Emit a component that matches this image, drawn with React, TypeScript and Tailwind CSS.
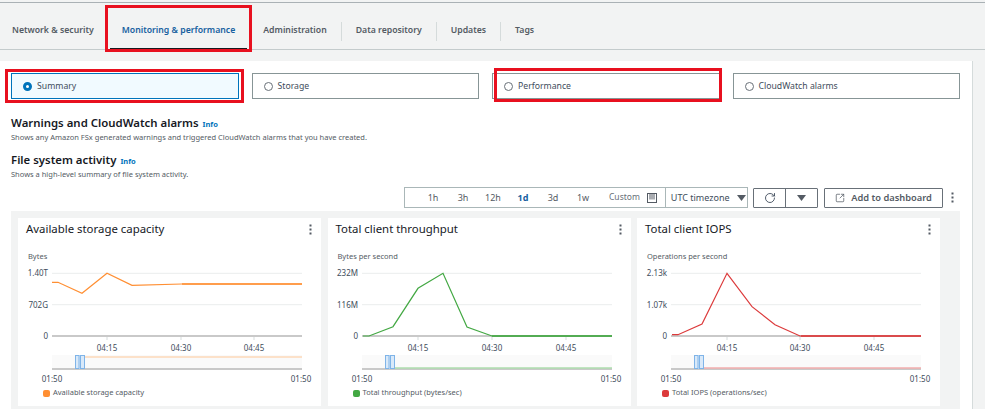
import React from "react";
import { RotateCw, SquareArrowOutUpRight } from "lucide-react";

const Kebab = () => (
  <svg width="3" height="11" viewBox="0 0 3 11" fill="#545b64">
    <rect x="0.5" y="0.5" width="2" height="2" />
    <rect x="0.5" y="4.5" width="2" height="2" />
    <rect x="0.5" y="8.5" width="2" height="2" />
  </svg>
);

const Caret = ({ color = "#545b64" }: { color?: string }) => (
  <svg width="9" height="6" viewBox="0 0 9 6" fill={color}>
    <path d="M0 0h9L4.5 6z" />
  </svg>
);

const RedBox = ({ className }: { className: string }) => (
  <span className={`absolute border-[3px] border-[#e8101f] pointer-events-none ${className}`} />
);

const tabs = ["Network & security", "Monitoring & performance", "Administration", "Data repository", "Updates", "Tags"];

const Tabs = () => (
  <div className="flex items-center h-[47px] pt-[10px] border-b border-[#c4cbcc]">
    {tabs.map((tab, i) => (
      <div
        key={tab}
        className={`relative flex items-center h-[19px] px-[14px] text-[8.7px] font-semibold whitespace-nowrap ${
          i === 0 ? "pl-[12px]" : ""
        } ${i > 1 && i < 5 ? "border-r border-[#d5dbdb]" : ""} ${
          i === 1 ? "text-[#16609f]" : "text-[#545b64]"
        }`}
      >
        {tab}
        {i === 1 && (
          <>
            <span className="absolute left-[2px] right-[2px] top-[26px] h-[2px] bg-[#16191f]" />
            <RedBox className="-left-[3px] -right-[3px] -top-[17px] -bottom-[11px]" />
          </>
        )}
      </div>
    ))}
  </div>
);

const RadioTile = ({ label, active, red }: { label: string; active?: boolean; red?: string }) => (
  <div
    className={`relative flex items-center h-[26px] pl-[11px] gap-[5px] border text-[8.7px] text-[#414d5c] ${
      active ? "bg-[#f1faff] border-[#0073bb]" : "border-[#879596]"
    }`}
  >
    {active ? (
      <span className="w-[9px] h-[9px] rounded-full border-[3px] border-[#0073bb] bg-white" />
    ) : (
      <span className="w-[9px] h-[9px] rounded-full border border-[#687078] bg-white" />
    )}
    <span className="pt-[1px]">{label}</span>
    {red && <RedBox className={red} />}
  </div>
);

const Heading = ({ title, desc }: { title: string; desc: string }) => (
  <>
    <div className="flex items-baseline gap-[4px] h-[16px] leading-[16px]">
      <span className="text-[11.4px] font-semibold text-[#16191f]">{title}</span>
      <span className="text-[7.5px] font-bold text-[#0073bb]">Info</span>
    </div>
    <div className="h-[10px] mt-[1px] leading-[10px] text-[7.5px] text-[#545b64]">{desc}</div>
  </>
);

const ranges = ["1h", "3h", "12h", "1d", "3d", "1w"];

const Toolbar = () => (
  <div className="flex justify-end items-center h-[21px] mt-[8px] pr-[18px] gap-[5px]">
    <div className="flex items-center h-[21px] w-[344px] pl-[13px] border border-[#aab7b8] text-[9px] text-[#545b64]">
      {ranges.map((r) => (
        <span key={r} className={`w-[30px] text-center ${r === "1d" ? "font-bold text-[#16609f]" : ""}`}>
          {r}
        </span>
      ))}
      <span className="ml-[11px] text-[8.5px] text-[#687078]">Custom</span>
      <svg className="ml-[7px]" width="10" height="10" viewBox="0 0 10 10" fill="none" stroke="#545b64">
        <rect x="0.5" y="0.5" width="9" height="9" />
        <path d="M3 0.5v6M5 0.5v6M7 0.5v6" />
      </svg>
      <span className="flex items-center h-full ml-[8px] pl-[5px] gap-[7px] border-l border-[#aab7b8] whitespace-nowrap text-[#414d5c]">
        UTC timezone
        <Caret />
      </span>
    </div>
    <div className="flex h-[20px] border border-[#687078] rounded-[1px] text-[#414d5c]">
      <span className="flex items-center justify-center w-[32px] border-r border-[#687078]">
        <RotateCw size={12} strokeWidth={1.8} />
      </span>
      <span className="flex items-center justify-center w-[31px]">
        <Caret />
      </span>
    </div>
    <div className="flex items-center justify-center h-[20px] w-[119px] ml-[1px] gap-[6px] border border-[#687078] rounded-[1px] text-[9.3px] font-semibold text-[#545b64] whitespace-nowrap">
      <SquareArrowOutUpRight size={10} strokeWidth={1.8} />
      Add to dashboard
    </div>
    <span className="ml-[3px]">
      <Kebab />
    </span>
  </div>
);

type Chart = {
  title: string;
  unit: string;
  y: [string, string];
  ticks: number[];
  points: string;
  color: string;
  light: string;
  miniY: number;
  flatY: number;
  legend: string;
};

const charts: Chart[] = [
  {
    title: "Available storage capacity",
    unit: "Bytes",
    y: ["1.40T", "702G"],
    ticks: [89, 163, 236],
    points: "34,20.3 40,20.3 64,31.3 89,11.3 114,23.3 164,22 284,22",
    color: "#ff8f33",
    light: "#fcd9b8",
    miniY: 95,
    flatY: 22,
    legend: "Available storage capacity",
  },
  {
    title: "Total client throughput",
    unit: "Bytes per second",
    y: ["232M", "116M"],
    ticks: [90, 164, 238],
    points: "35,74 41,74 65,64.7 90,26.3 115,11.3 139,65 164,74 284,74",
    color: "#43a843",
    light: "#aedcae",
    miniY: 106,
    flatY: 74,
    legend: "Total throughput (bytes/sec)",
  },
  {
    title: "Total client IOPS",
    unit: "Operations per second",
    y: ["2.13k", "1.07k"],
    ticks: [90, 163, 237],
    points: "35,72.7 41,72.7 65,62 90,11.3 115,44.7 138,62.7 163,74 284,74",
    color: "#dc3a3b",
    light: "#f2aeae",
    miniY: 106,
    flatY: 74,
    legend: "Total IOPS (operations/sec)",
  },
];

const ChartCard = ({ chart }: { chart: Chart }) => {
  const labels = ["04:15", "04:30", "04:45"];
  return (
    <div className="bg-white pb-[7px]">
      <div className="flex items-center justify-between h-[22px] pl-[8px] pr-[9px] text-[11.4px] text-[#16191f] whitespace-nowrap">
        {chart.title}
        <Kebab />
      </div>
      <div className="h-[12px] mt-[10px] pl-[10px] leading-[12px] text-[7.5px] text-[#545b64]">{chart.unit}</div>
      <svg width="303" height="123" className="block" fontSize="8" fill="#414d5c">
        <line x1="34" x2="284" y1="11.3" y2="11.3" stroke="#eaeded" />
        <line x1="34" x2="284" y1="42.7" y2="42.7" stroke="#eaeded" />
        <line x1="34" x2="284" y1="74" y2="74" stroke="#c9c9c9" strokeWidth="2" />
        <text x="30" y="14" textAnchor="end">{chart.y[0]}</text>
        <text x="30" y="45.5" textAnchor="end">{chart.y[1]}</text>
        <text x="30" y="77" textAnchor="end">0</text>
        {chart.ticks.map((t, i) => (
          <g key={t}>
            <line x1={t} x2={t} y1="75" y2="78" stroke="#d5dbdb" />
            <text x={t} y="89" textAnchor="middle">{labels[i]}</text>
          </g>
        ))}
        <polyline points={chart.points} fill="none" stroke={chart.color} strokeWidth="1.2" />
        <line x1="164" x2="284" y1={chart.flatY} y2={chart.flatY} stroke={chart.color} strokeWidth="1.6" />
        <rect x="34" y="93" width="250" height="14" fill="#fafafa" />
        <line x1="34" x2="284" y1="107" y2="107" stroke="#c9c9c9" strokeWidth="2" />
        <line x1="62" x2="284" y1={chart.miniY} y2={chart.miniY} stroke={chart.light} strokeWidth="1.5" />
        <rect x="57" y="93" width="10" height="14" fill="#d9e9f9" />
        <rect x="57.5" y="93.5" width="3.5" height="13" fill="none" stroke="#7fb4e8" />
        <rect x="62.5" y="93.5" width="4" height="13" fill="none" stroke="#7fb4e8" />
        <text x="34" y="120" textAnchor="middle">01:50</text>
        <text x="283" y="120" textAnchor="middle">01:50</text>
      </svg>
      <div className="flex items-center h-[12px] mt-[2px] pl-[25px] gap-[3px] text-[7.5px] text-[#545b64] whitespace-nowrap">
        <span className="w-[7px] h-[7px] rounded-[2px]" style={{ backgroundColor: chart.color }} />
        {chart.legend}
      </div>
    </div>
  );
};

export default function App() {
  return (
    <div className="w-[985px] h-[409px] overflow-hidden bg-[#f2f3f3] pt-[2px] font-['Noto_Sans',sans-serif]">
      <div className="border-t border-[#aab1b5]">
        <Tabs />
      </div>
      <div className="w-[973px] mt-[11px] h-[360px] bg-white border-r border-[#d5dbdb]">
        <div className="grid grid-cols-4 gap-[13px] pt-[12px] pl-[11px] pr-[12px]">
          <RadioTile label="Summary" active red="-left-[7px] -right-[6px] -top-[5px] -bottom-[5px]" />
          <RadioTile label="Storage" />
          <RadioTile label="Performance" red="left-[1px] -right-[3px] -top-[6px] -bottom-[4px]" />
          <RadioTile label="CloudWatch alarms" />
        </div>
        <div className="pl-[11px] pt-[16px]">
          <Heading
            title="Warnings and CloudWatch alarms"
            desc="Shows any Amazon FSx generated warnings and triggered CloudWatch alarms that you have created."
          />
          <div className="h-[10px]" />
          <Heading title="File system activity" desc="Shows a high-level summary of file system activity." />
        </div>
        <Toolbar />
        <div className="mt-[3px] ml-[11px] mr-[12px] pl-[7px] pr-[20px] pt-[7px] pb-[3px] bg-[#f2f3f3]">
          <div className="grid grid-cols-3 gap-[6.5px]">
            {charts.map((c) => (
              <ChartCard key={c.title} chart={c} />
            ))}
          </div>
        </div>
      </div>
    </div>
  );
}
